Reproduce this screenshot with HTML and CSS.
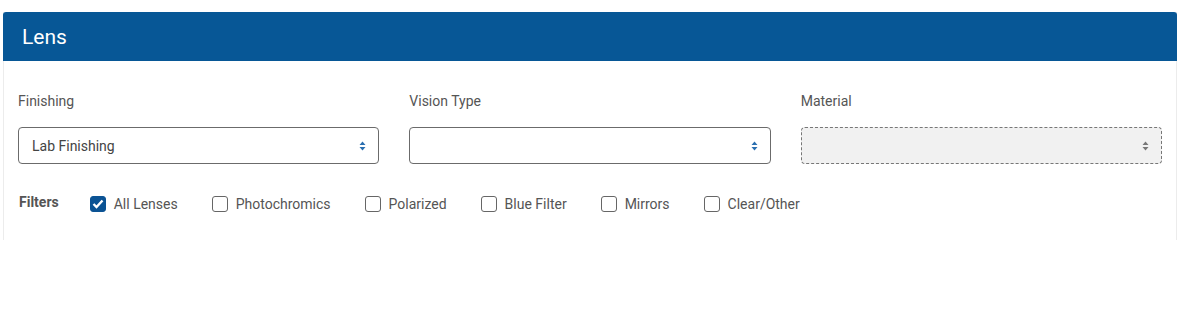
FILE: index.html
```html
<!DOCTYPE html>
<html lang="en">
<head>
    <meta charset="UTF-8">
    <meta name="viewport" content="width=device-width, initial-scale=1.0">
    <title>Lens</title>
    <link rel="stylesheet" href="styles.css">
</head>
<body>
    <div class="card">
        <div class="card-header">Lens</div>
        <div class="card-body">
            <div class="fields">
                <div class="field">
                    <label>Finishing</label>
                    <div class="select">
                        <span>Lab Finishing</span>
                        <svg width="7" height="10" viewBox="0 0 7 10"><path d="M3.5 0.5 L6.5 4 H0.5 Z M0.5 6 H6.5 L3.5 9.5 Z" fill="#2a6fb0"/></svg>
                    </div>
                </div>
                <div class="field">
                    <label>Vision Type</label>
                    <div class="select">
                        <span></span>
                        <svg width="7" height="10" viewBox="0 0 7 10"><path d="M3.5 0.5 L6.5 4 H0.5 Z M0.5 6 H6.5 L3.5 9.5 Z" fill="#2a6fb0"/></svg>
                    </div>
                </div>
                <div class="field">
                    <label>Material</label>
                    <div class="select disabled">
                        <span></span>
                        <svg width="7" height="10" viewBox="0 0 7 10"><path d="M3.5 0.5 L6.5 4 H0.5 Z M0.5 6 H6.5 L3.5 9.5 Z" fill="#777"/></svg>
                    </div>
                </div>
            </div>
            <div class="filters">
                <span class="filters-title">Filters</span>
                <label class="check">
                    <span class="box checked">
                        <svg width="12" height="10" viewBox="0 0 12 10"><path d="M1.5 5 L4.5 8 L10.5 1.5" fill="none" stroke="#fff" stroke-width="2.4"/></svg>
                    </span>
                    All Lenses
                </label>
                <label class="check"><span class="box"></span>Photochromics</label>
                <label class="check"><span class="box"></span>Polarized</label>
                <label class="check"><span class="box"></span>Blue Filter</label>
                <label class="check"><span class="box"></span>Mirrors</label>
                <label class="check"><span class="box"></span>Clear/Other</label>
            </div>
        </div>
    </div>
</body>
</html>
```

FILE: styles.css
```css
body {
    font-family: Roboto, "Liberation Sans", Arial, sans-serif;
    font-size: 14px;
    color: #555;
    background-color: #fff;
    margin: 0;
    padding: 12px 3px 0 3px;
}
.card {
    border: 1px solid #ececec;
    border-top: none;
    border-bottom: none;
}
.card-header {
    background-color: #075796;
    color: white;
    font-size: 21px;
    height: 49px;
    display: flex;
    align-items: center;
    padding: 0 19px;
    margin: 0 -1px;
    border-radius: 3px 3px 0 0;
}
.card-body {
    padding: 30px 14px 26px 14px;
}
.fields {
    display: grid;
    grid-template-columns: 1fr 1fr 1fr;
    column-gap: 30px;
}
.field label {
    display: block;
    line-height: 20px;
    color: #555;
    margin-bottom: 16px;
}
.select {
    height: 37px;
    box-sizing: border-box;
    border: 1px solid #6b6b6b;
    border-radius: 4px;
    display: flex;
    align-items: center;
    justify-content: space-between;
    padding: 0 12px 0 13px;
    color: #444;
}
.select.disabled {
    border: 1px dashed #777;
    background-color: #f1f1f1;
}
.filters {
    display: flex;
    align-items: center;
    margin-top: 30px;
    height: 20px;
}
.filters-title {
    font-weight: bold;
    color: #555;
    margin: -4px 31px 0 1px;
}
.check {
    display: flex;
    align-items: center;
    gap: 8px;
    margin-right: 34px;
    color: #555;
}
.box {
    width: 14px;
    height: 14px;
    border: 1px solid #666;
    border-radius: 3px;
    display: flex;
    align-items: center;
    justify-content: center;
}
.box.checked {
    background-color: #0b5394;
    border-color: #0b5394;
}
```
